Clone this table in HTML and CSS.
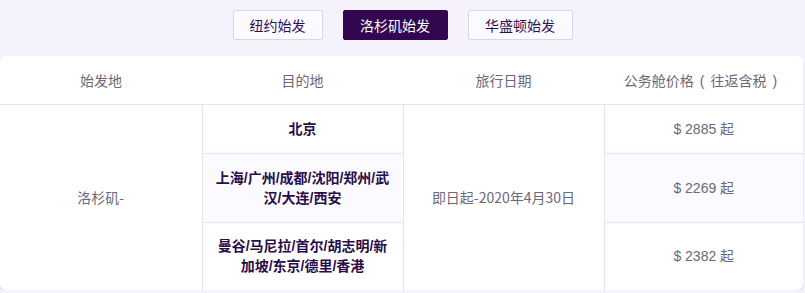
FILE: index.html
```html
<!DOCTYPE html>
<html lang="zh">
<head>
<meta charset="utf-8">
<link rel="stylesheet" href="styles.css">
</head>
<body>
<div class="tabs">
  <button class="tab">纽约始发</button>
  <button class="tab active">洛杉矶始发</button>
  <button class="tab">华盛顿始发</button>
</div>
<div class="card">
  <table class="fares">
    <colgroup>
      <col class="c1"><col class="c2"><col class="c3"><col class="c4">
    </colgroup>
    <thead>
      <tr>
        <th>始发地</th>
        <th>目的地</th>
        <th>旅行日期</th>
        <th>公务舱价格<span class="paren">(</span>往返含税<span class="paren">)</span></th>
      </tr>
    </thead>
    <tbody>
      <tr class="r1">
        <td rowspan="3" class="plain">洛杉矶-</td>
        <td class="dest">北京</td>
        <td rowspan="3" class="plain">即日起-2020年4月30日</td>
        <td class="price">$ 2885 起</td>
      </tr>
      <tr class="r2 tint">
        <td class="dest">上海/广州/成都/沈阳/郑州/武汉/大连/西安</td>
        <td class="price">$ 2269 起</td>
      </tr>
      <tr class="r3">
        <td class="dest">曼谷/马尼拉/首尔/胡志明/新加坡/东京/德里/香港</td>
        <td class="price">$ 2382 起</td>
      </tr>
    </tbody>
  </table>
</div>
</body>
</html>
```

FILE: styles.css
```css
* { box-sizing: border-box; }
html, body {
  margin: 0;
  padding: 0;
  background: #f5f2fc;
  font-family: "Liberation Sans", "Noto Sans CJK SC", sans-serif;
}
.tabs {
  display: flex;
  justify-content: center;
  gap: 20px;
  padding-top: 10px;
  height: 56px;
}
.tab {
  height: 30px;
  padding: 0;
  border: 1px solid #d9d4e6;
  border-radius: 2px;
  background: #fbfaff;
  color: #2e1250;
  font-family: "Noto Sans CJK SC", sans-serif;
  font-size: 14px;
  line-height: 28px;
}
.tab:first-child { width: 90px; }
.tab.active {
  background: #32074f;
  border-color: #32074f;
  color: #ffffff;
  width: 105px;
}
.tab:last-child { width: 105px; }
.card {
  width: 803px;
  background: #ffffff;
  border-radius: 6px;
  box-shadow: 0 2px 2px rgba(170, 150, 210, 0.35);
  overflow: hidden;
  height: 234px;
}
.fares {
  width: 100%;
  border-collapse: collapse;
  table-layout: fixed;
  font-size: 14px;
  text-align: center;
}
.c1 { width: 202px; }
.c2 { width: 201px; }
.c3 { width: 201px; }
.fares th {
  height: 48px;
  font-weight: normal;
  color: #6b6878;
  font-family: "Noto Sans CJK SC", sans-serif;
  border-bottom: 1px solid #e6e2ef;
  padding: 0;
}
.paren {
  font-family: "Liberation Sans", sans-serif;
  margin: 0 6px;
}
.fares td {
  border: 1px solid #e6e2ef;
  padding: 0 8px;
  line-height: 20px;
  color: #6b6878;
}
.fares tr td:first-child { border-left: none; }
.fares tr td:last-child { border-right: none; }
.fares tr.r3 td { border-bottom: none; }
.fares td[rowspan] { border-bottom: none; }
.fares td.plain { font-family: "Noto Sans CJK SC", sans-serif; }
.r1 td { height: 49px; }
.r2 td { height: 69px; }
.r3 td { height: 68px; }
.fares td.dest {
  font-weight: bold;
  color: #2a0d48;
  padding: 0 10px;
  word-break: break-all;
  font-family: "Liberation Sans", "Noto Sans CJK SC", sans-serif;
}
.tint td.dest, .tint td.price { background: #fbfbff; }
.fares td.price { color: #6b6878; }
```
